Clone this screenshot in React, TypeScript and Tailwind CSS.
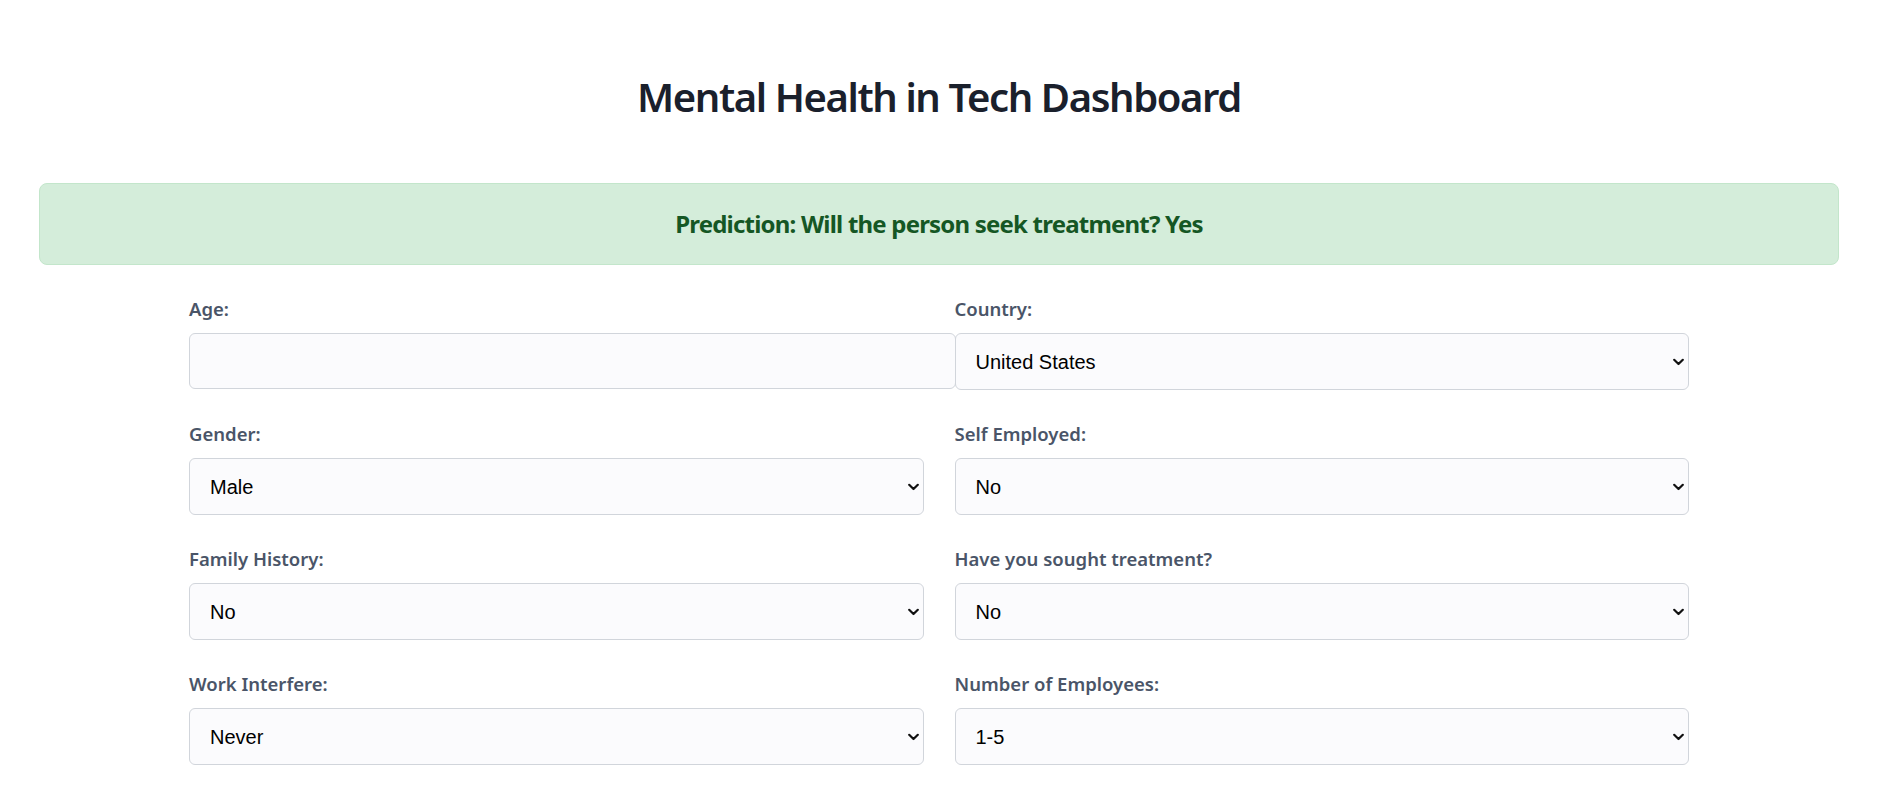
import { useState } from "react";

const countries = ["United States", "United Kingdom", "Canada", "Germany", "India"];

function Chevron() {
  return (
    <svg
      className="pointer-events-none absolute right-[5px] top-1/2 -translate-y-1/2"
      width="11"
      height="7"
      viewBox="0 0 11 7"
      fill="none"
    >
      <path d="M1.2 1.2 L5.5 5.5 L9.8 1.2" stroke="#111" strokeWidth="2.2" strokeLinecap="round" strokeLinejoin="round" />
    </svg>
  );
}

function SelectField({
  label,
  value,
  options,
  onChange,
}: {
  label: string;
  value: string;
  options: string[];
  onChange: (v: string) => void;
}) {
  return (
    <div>
      <label className="block h-6 mb-3 text-[18.5px] leading-6 font-semibold text-[#4a5568]">{label}</label>
      <div className="relative">
        <select
          value={value}
          onChange={(e) => onChange(e.target.value)}
          className="block w-full h-[57px] appearance-none rounded-[6px] border border-[#d1d5db] bg-[#fbfbfd] pl-[20px] pr-8 py-0 text-[20px] text-black outline-none"
          style={{ fontFamily: '"Liberation Sans", Arial, sans-serif' }}
        >
          {options.map((o) => (
            <option key={o}>{o}</option>
          ))}
        </select>
        <Chevron />
      </div>
    </div>
  );
}

export default function App() {
  const [age, setAge] = useState("");
  const [country, setCountry] = useState("United States");
  const [gender, setGender] = useState("Male");
  const [selfEmployed, setSelfEmployed] = useState("No");
  const [family, setFamily] = useState("No");
  const [treatment, setTreatment] = useState("No");
  const [work, setWork] = useState("Never");
  const [employees, setEmployees] = useState("1-5");

  return (
    <div
      className="min-h-screen bg-white pl-[39px] pt-[73px] pb-10"
      style={{ fontFamily: '"Noto Sans", "Open Sans", sans-serif' }}
    >
      <div className="w-[1800px]">
        {/* header */}
        <h1 className="text-center text-[40px] leading-[48px] font-semibold tracking-[-1.4px] text-[#1a202c]">
          Mental Health in Tech Dashboard
        </h1>

        <div className="mt-[62px] rounded-[8px] border border-[#c3e6cb] bg-[#d4edda] py-[25px] text-center">
          <p className="text-[24px] leading-[30px] font-bold tracking-[-0.8px] text-[#155724]">
            Prediction: Will the person seek treatment? Yes
          </p>
        </div>

        {/* form */}
        <form className="mx-auto mt-8 grid w-[1500px] grid-cols-2 gap-x-[31px] gap-y-8">
          <div>
            <label className="block h-6 mb-3 text-[18.5px] leading-6 font-semibold text-[#4a5568]">Age:</label>
            <input
              type="number"
              value={age}
              onChange={(e) => setAge(e.target.value)}
              className="block w-[calc(100%+32px)] h-[56px] rounded-[6px] border border-[#d1d5db] bg-[#fbfbfd] px-[15px] text-[20px] outline-none"
              style={{ fontFamily: '"Liberation Sans", Arial, sans-serif' }}
            />
          </div>
          <SelectField label="Country:" value={country} options={countries} onChange={setCountry} />
          <SelectField label="Gender:" value={gender} options={["Male", "Female", "Other"]} onChange={setGender} />
          <SelectField label="Self Employed:" value={selfEmployed} options={["No", "Yes"]} onChange={setSelfEmployed} />
          <SelectField label="Family History:" value={family} options={["No", "Yes"]} onChange={setFamily} />
          <SelectField
            label="Have you sought treatment?"
            value={treatment}
            options={["No", "Yes"]}
            onChange={setTreatment}
          />
          <SelectField
            label="Work Interfere:"
            value={work}
            options={["Never", "Rarely", "Sometimes", "Often"]}
            onChange={setWork}
          />
          <SelectField
            label="Number of Employees:"
            value={employees}
            options={["1-5", "6-25", "26-100", "100-500", "500-1000", "More than 1000"]}
            onChange={setEmployees}
          />
        </form>
      </div>
    </div>
  );
}
